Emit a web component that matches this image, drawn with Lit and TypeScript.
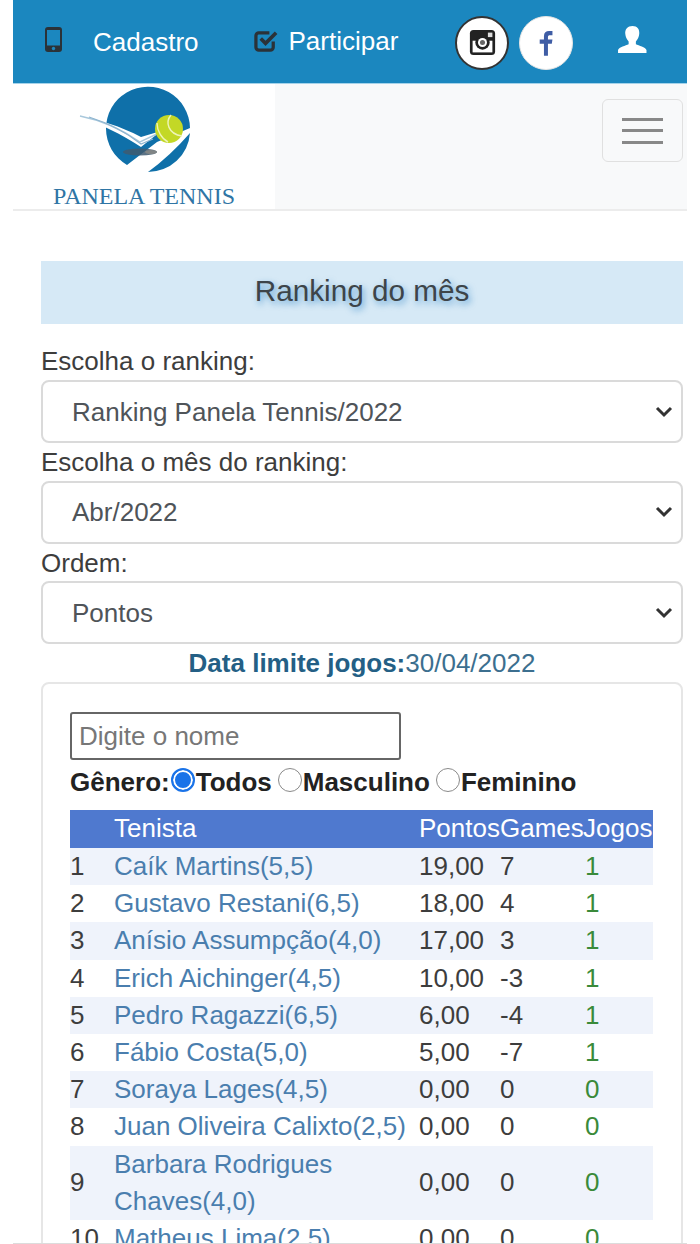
import { LitElement, html, css } from "lit";
import { customElement } from "lit/decorators.js";

const rows = [
  ["1", "Caík Martins(5,5)", "19,00", "7", "1"],
  ["2", "Gustavo Restani(6,5)", "18,00", "4", "1"],
  ["3", "Anísio Assumpção(4,0)", "17,00", "3", "1"],
  ["4", "Erich Aichinger(4,5)", "10,00", "-3", "1"],
  ["5", "Pedro Ragazzi(6,5)", "6,00", "-4", "1"],
  ["6", "Fábio Costa(5,0)", "5,00", "-7", "1"],
  ["7", "Soraya Lages(4,5)", "0,00", "0", "0"],
  ["8", "Juan Oliveira Calixto(2,5)", "0,00", "0", "0"],
  ["9", "Barbara Rodrigues Chaves(4,0)", "0,00", "0", "0"],
  ["10", "Matheus Lima(2,5)", "0,00", "0", "0"],
];

const selects = [
  ["Escolha o ranking:", "Ranking Panela Tennis/2022"],
  ["Escolha o mês do ranking:", "Abr/2022"],
  ["Ordem:", "Pontos"],
];

@customElement("app-root")
export class AppRoot extends LitElement {
  static styles = css`
    :host { display: block; height: 1244px; overflow: hidden; background: #fff; font-family: "Liberation Sans", Arial, sans-serif; font-size: 26px; line-height: 37.2px; color: #3d3d3d; }
    .page { margin: 0 13px; height: 1243px; overflow: hidden; border-bottom: 1px solid #dcdcdc; }
    .top { height: 83px; background: #1b87bf; display: flex; align-items: center; color: #fff; border-bottom: 1px solid #a5d3ea; }
    .phone { margin-left: 32px; width: 17px; height: 25px; margin-top: -4px; }
    .cad { margin-left: 31px; margin-top: 3px; }
    .chk { margin-left: 55px; width: 25px; height: 25px; margin-top: -3px; }
    .part { margin-left: 10px; }
    .soc { width: 54px; height: 54px; border-radius: 50%; background: #fff; display: flex; align-items: center; justify-content: center; box-sizing: border-box; margin-top: 2px; }
    .ig { margin-left: 57px; border: 2px solid #333; }
    .fb { margin-left: 10px; border: 1px solid #e4e4e4; }
    .user { margin-left: 45px; width: 29px; height: 27px; margin-top: -4px; }
    .nav { height: 125px; display: flex; background: #f8f9fa; border-bottom: 2px solid #ececec; }
    .brand { width: 262px; background: #fff; display: flex; flex-direction: column; align-items: center; overflow: hidden; }
    .logo { width: 124px; height: 96px; display: block; align-self: flex-start; margin-left: 62px; flex: none; }
    .bname { font-family: "Liberation Serif", serif; font-size: 24px; line-height: 26px; color: #2f75a5; white-space: nowrap; margin-top: 3px; }
    .navr { flex: 1; display: flex; justify-content: flex-end; align-items: flex-start; padding: 15px 4px 0 0; }
    .burger { width: 81px; height: 63px; border: 1px solid #e0e0e0; border-radius: 6px; box-sizing: border-box; display: flex; flex-direction: column; justify-content: center; align-items: center; gap: 8.5px; }
    .burger i { display: block; width: 41px; height: 3px; background: #888; }
    main { padding: 50px 4px 0 28px; }
    .title { height: 63px; box-sizing: border-box; padding-bottom: 3px; background: #d6e9f6; display: flex; align-items: center; justify-content: center; font-size: 29.700px; color: #3d4449; text-shadow: 2px 3px 6px rgba(28, 120, 190, .65); }
    .lbl { display: block; height: 37.5px; line-height: 39px; }
    .lbl.first { margin-top: 18.5px; line-height: 37.5px; }
    .sel { height: 63px; border: 2px solid #dadada; border-radius: 8px; box-sizing: border-box; display: flex; align-items: center; justify-content: space-between; padding: 2px 7px 0 29px; color: #4f5459; }
    .sel svg { width: 20px; height: 14px; margin-top: -2px; }
    .limit { text-align: center; height: 38px; line-height: 39px; color: #3c6f8f; }
    .limit b { color: #245f85; }
    .card { border: 2px solid #e6e6e6; border-radius: 8px; padding: 28px 27px 0 27px; height: 700px; box-sizing: border-box; }
    .search { width: 331px; height: 48px; border: 2px solid #666; border-radius: 3px; box-sizing: border-box; padding-left: 7px; line-height: 45px; color: #777; }
    .gen { display: flex; align-items: center; height: 37px; margin-top: 4px; font-weight: 700; color: #222; white-space: nowrap; }
    .r { width: 24px; height: 24px; border: 1.5px solid #8a8a8a; border-radius: 50%; box-sizing: border-box; flex: none; margin-bottom: 5px; margin-left: 6px; }
    .r.on { margin-left: 1px; border: 2px solid #1a73e8; background: #1a73e8; box-shadow: inset 0 0 0 2px #fff; }
    .gen .t { margin-left: 1px; }
    table { border-collapse: collapse; table-layout: fixed; width: 583px; margin-top: 9px; }
    th, td { padding: 0; text-align: left; font-weight: 400; vertical-align: middle; }
    th { background: #4f79cf; color: #fff; height: 38px; white-space: nowrap; }
    td { height: 37.2px; }
    tr.odd td { background: #eff3fb; }
    td a { color: #4a7eae; }
    .j { color: #3a8a3a; padding-left: 2px; }
    .c0 { width: 44px; } .c1 { width: 305px; } .c2 { width: 81px; } .c3 { width: 83px; } .c4 { width: 70px; }
  `;

  render() {
    return html`<div class="page">
      <div class="top">
        <svg class="phone" viewBox="0 0 17 25"><rect width="17" height="25" rx="3" fill="#2b3238"/><rect x="2" y="3" width="13" height="15.500" fill="#1b87bf"/><circle cx="8.500" cy="21.500" r="1.700" fill="#1b87bf"/></svg>
        <span class="cad">Cadastro</span>
        <svg class="chk" viewBox="0 0 26 26"><path d="M20 14v6a3 3 0 0 1-3 3H5a3 3 0 0 1-3-3V8a3 3 0 0 1 3-3h11" fill="none" stroke="#2b3238" stroke-width="3.400"/><path d="M7 11l5 5 11-11" fill="none" stroke="#2b3238" stroke-width="3.800"/></svg>
        <span class="part">Participar</span>
        <div class="soc ig">
          <svg width="27" height="27" viewBox="0 0 30 30"><rect x="1" y="1" width="28" height="28" rx="4" fill="#222"/><rect x="4" y="13" width="22" height="13" fill="#fff"/><circle cx="15" cy="15" r="8" fill="#222"/><circle cx="15" cy="15" r="5" fill="#fff"/><circle cx="15" cy="15" r="2.800" fill="#666"/><rect x="21" y="4" width="5" height="5" fill="#ddd"/></svg>
        </div>
        <div class="soc fb">
          <svg width="17" height="28" viewBox="0 0 20 32"><path d="M7 31V17H2v-5h5V8c0-4 2.400-6 6-6h4v5h-3c-1.500 0-2.300.7-2.300 2v3H17l-.8 5h-4.500v14z" fill="#3f5da5"/></svg>
        </div>
        <svg class="user" viewBox="0 0 30 28"><path d="M15 0c5 0 7.500 3.500 7 8-.3 3-1.500 6-3.500 8v3c3 1.500 10 3 11 6v3H0v-3c1-3 8-4.500 11-6v-3C9 14 7.800 11 7.500 8 7 3.500 10 0 15 0z" fill="#fff"/></svg>
      </div>
      <div class="nav">
        <div class="brand">
          <svg class="logo" viewBox="0 0 124 96">
            <path d="M115 44A42 42 0 1 0 52 81L82 58z" fill="#0f70a9"/>
            <path d="M115 49A42 42 0 0 1 73 88Q95 72 115 49z" fill="#0f70a9"/>
            <path d="M5 32C25 36 45 42 66 53L86 47 66 63C46 50 25 40 5 32z" fill="#fff"/>
            <path d="M5 32C25 36 45 44 65 58L84 49" fill="none" stroke="#a9c8dc" stroke-width="1.400"/>
            <path d="M14 33C30 38 48 46 66 60L78 55" fill="none" stroke="#8db4cf" stroke-width="1.200"/>
            <ellipse cx="65" cy="68" rx="17" ry="3.500" fill="#3f5a70" opacity=".85"/>
            <ellipse cx="76" cy="68" rx="6" ry="2" fill="#8a8a86" opacity=".8"/>
            <circle cx="94" cy="45" r="14" fill="#c3d826"/>
            <path d="M96 31C90 38 93 50 107 52M82 39C82 47 87 55 93 58" fill="none" stroke="#eef4b8" stroke-width="1.400"/>
          </svg>
          <div class="bname">PANELA TENNIS</div>
        </div>
        <div class="navr"><div class="burger"><i></i><i></i><i></i></div></div>
      </div>
      <main>
        <div class="title">Ranking do mês</div>
        ${selects.map(([l, v], i) => html`
          <label class="lbl ${i === 0 ? "first" : ""}">${l}</label>
          <div class="sel"><span>${v}</span>
            <svg viewBox="0 0 20 14"><path d="M3 3l7 7 7-7" fill="none" stroke="#333" stroke-width="3"/></svg>
          </div>`)}
        <div class="limit"><b>Data limite jogos:</b>30/04/2022</div>
        <div class="card">
          <div class="search">Digite o nome</div>
          <div class="gen">Gênero:<span class="r on"></span><span class="t">Todos</span><span class="r"></span><span class="t">Masculino</span><span class="r"></span><span class="t">Feminino</span></div>
          <table>
            <colgroup><col class="c0"/><col class="c1"/><col class="c2"/><col class="c3"/><col class="c4"/></colgroup>
            <tr><th></th><th>Tenista</th><th>Pontos</th><th>Games</th><th>Jogos</th></tr>
            ${rows.map((r, i) => html`<tr class=${i % 2 === 0 ? "odd" : ""}>
              <td>${r[0]}</td><td><a>${r[1]}</a></td><td>${r[2]}</td><td>${r[3]}</td><td class="j">${r[4]}</td></tr>`)}
          </table>
        </div>
      </main>
    </div>`;
  }
}
